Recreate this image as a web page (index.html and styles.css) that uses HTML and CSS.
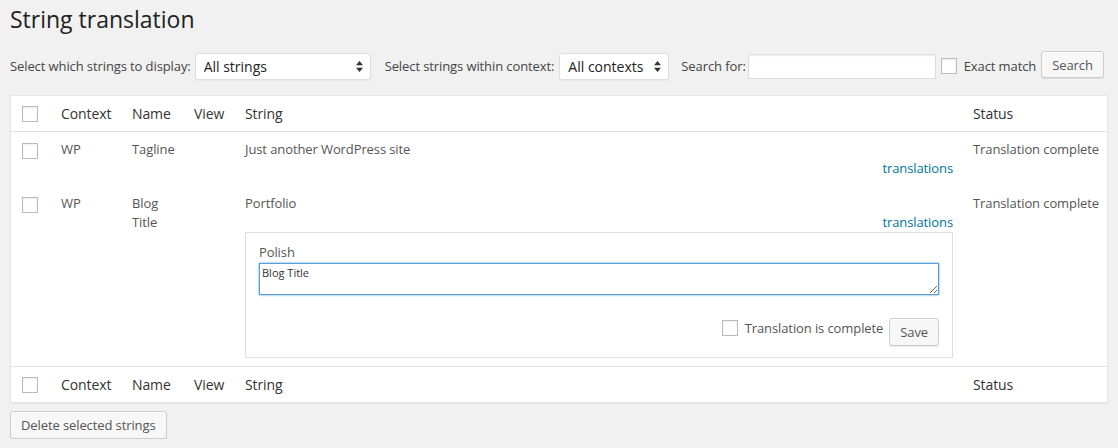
FILE: index.html
```html
<!DOCTYPE html>
<html lang="en">
<head>
    <meta charset="UTF-8">
    <title>String translation</title>
    <link rel="stylesheet" href="styles.css">
</head>
<body>
    <h2 class="page-title">String translation</h2>

    <form class="filters">
        <label class="filter-label" for="status">Select which strings to display:</label>
        <span class="select-wrap select-status">
            <select id="status"><option>All strings</option></select>
            <svg class="select-arrows" width="7" height="11" viewBox="0 0 7 11"><path d="M3.5 0L7 4.2H0z M3.5 11L0 6.8h7z" fill="#333"/></svg>
        </span>
        <label class="filter-label context-label" for="context">Select strings within context:</label>
        <span class="select-wrap select-context">
            <select id="context"><option>All contexts</option></select>
            <svg class="select-arrows" width="7" height="11" viewBox="0 0 7 11"><path d="M3.5 0L7 4.2H0z M3.5 11L0 6.8h7z" fill="#333"/></svg>
        </span>
        <label class="filter-label search-label" for="search">Search for:</label>
        <input class="search-input" id="search" type="text">
        <input class="check" id="exact" type="checkbox">
        <label class="filter-label exact-label" for="exact">Exact match</label>
        <button class="button search-button" type="button">Search</button>
    </form>

    <table class="strings">
        <colgroup>
            <col class="col-cb">
            <col class="col-context">
            <col class="col-name">
            <col class="col-view">
            <col class="col-string">
            <col class="col-status">
        </colgroup>
        <thead>
            <tr>
                <th class="check-column"><input class="check" type="checkbox"></th>
                <th>Context</th>
                <th>Name</th>
                <th>View</th>
                <th>String</th>
                <th>Status</th>
            </tr>
        </thead>
        <tbody>
            <tr>
                <td class="check-column"><input class="check" type="checkbox"></td>
                <td>WP</td>
                <td>Tagline</td>
                <td></td>
                <td>
                    <div>Just another WordPress site</div>
                    <div class="row-link"><a href="#">translations</a></div>
                </td>
                <td class="status">Translation complete</td>
            </tr>
            <tr>
                <td class="check-column"><input class="check" type="checkbox"></td>
                <td>WP</td>
                <td>Blog Title</td>
                <td></td>
                <td>
                    <div>Portfolio</div>
                    <div class="row-link"><a href="#">translations</a></div>
                    <div class="translation-box">
                        <label class="lang-label" for="pl">Polish</label>
                        <textarea class="translation-text" id="pl">Blog Title</textarea>
                        <div class="translation-actions">
                            <label class="complete-label"><input class="check" type="checkbox"> Translation is complete</label>
                            <button class="button" type="button">Save</button>
                        </div>
                    </div>
                </td>
                <td class="status">Translation complete</td>
            </tr>
        </tbody>
        <tfoot>
            <tr>
                <th class="check-column"><input class="check" type="checkbox"></th>
                <th>Context</th>
                <th>Name</th>
                <th>View</th>
                <th>String</th>
                <th>Status</th>
            </tr>
        </tfoot>
    </table>

    <div class="bulk-actions">
        <button class="button" type="button">Delete selected strings</button>
    </div>
</body>
</html>
```

FILE: styles.css
```css
body {
    margin: 0;
    padding: 0 10px;
    background: #f1f1f1;
    color: #444;
    font-family: "Open Sans", "Liberation Sans", sans-serif;
    font-size: 13px;
    line-height: 1.4;
    letter-spacing: -0.1px;
}
.page-title {
    margin: 5px 0 0;
    font-size: 23px;
    font-weight: 400;
    line-height: 29px;
    letter-spacing: 0;
    color: #222;
}

/* filter bar */
.filters {
    display: flex;
    align-items: center;
    height: 28px;
    margin-top: 18px;
}
.filter-label {
    color: #444;
    white-space: nowrap;
}
.context-label {
    margin-left: 14px;
}
.search-label {
    margin-left: 12px;
}
.select-wrap {
    position: relative;
    display: inline-block;
    margin-left: 4px;
}
.select-context {
    margin-left: 5px;
}
.select-wrap select {
    -webkit-appearance: none;
    appearance: none;
    display: block;
    height: 27px;
    padding: 0 24px 0 8px;
    border: 1px solid #ddd;
    border-radius: 3px;
    background: #fff;
    box-shadow: 0 1px 1px rgba(0, 0, 0, 0.05);
    color: #222;
    font-family: inherit;
    font-size: 14px;
    letter-spacing: 0;
}
.select-status select {
    width: 176px;
}
.select-context select {
    width: 110px;
}
.select-arrows {
    position: absolute;
    right: 8px;
    top: 8px;
    pointer-events: none;
}
.search-input {
    width: 188px;
    height: 25px;
    margin: 0 0 0 2px;
    padding: 2px 4px;
    box-sizing: border-box;
    border: 1px solid #ddd;
    background: #fff;
    box-shadow: inset 0 1px 2px rgba(0, 0, 0, 0.07);
    font-family: inherit;
    font-size: 13px;
}
.check {
    -webkit-appearance: none;
    appearance: none;
    display: inline-block;
    width: 16px;
    height: 16px;
    margin: 0;
    box-sizing: border-box;
    border: 1px solid #bbb;
    background: #fff;
    box-shadow: inset 0 1px 2px rgba(0, 0, 0, 0.07);
    vertical-align: middle;
}
.filters .check {
    margin-left: 5px;
}
.exact-label {
    margin-left: 7px;
}
.button {
    display: inline-block;
    height: 28px;
    padding: 0 10px 1px;
    box-sizing: border-box;
    border: 1px solid #ccc;
    border-radius: 3px;
    background: #f7f7f7;
    box-shadow: inset 0 1px 0 #fff, 0 1px 0 rgba(0, 0, 0, 0.08);
    color: #555;
    font-family: inherit;
    font-size: 13px;
    line-height: 26px;
    letter-spacing: -0.1px;
    white-space: nowrap;
    cursor: pointer;
}
.search-button {
    height: 27px;
    margin: 0 0 3px 5px;
}

/* strings table */
.strings {
    width: 1098px;
    margin-top: 15px;
    table-layout: fixed;
    border-collapse: separate;
    border-spacing: 0;
    border: 1px solid #e5e5e5;
    background: #fff;
    box-shadow: 0 1px 1px rgba(0, 0, 0, 0.04);
}
.col-cb { width: 40px; }
.col-context { width: 71px; }
.col-name { width: 62px; }
.col-view { width: 51px; }
.col-string { width: 728px; }
.col-status { width: 144px; }
.strings th {
    padding: 8px 10px;
    color: #333;
    font-size: 14px;
    font-weight: 400;
    line-height: 19px;
    text-align: left;
}
.strings thead th {
    border-bottom: 1px solid #e1e1e1;
}
.strings tfoot th {
    border-top: 1px solid #e1e1e1;
}
.strings td {
    padding: 8px 10px;
    color: #555;
    font-size: 13px;
    line-height: 19px;
    vertical-align: top;
}
.strings .check-column {
    padding: 0 0 0 11px;
    vertical-align: middle;
}
.strings .check-column .check {
    display: block;
}
.strings td.check-column {
    padding-top: 11px;
    vertical-align: top;
}
.strings td.status {
    white-space: nowrap;
}
.row-link {
    text-align: right;
}
.row-link a {
    color: #0074a2;
    text-decoration: none;
}

/* inline translation editor */
.translation-box {
    padding: 10px 13px 11px;
    border: 1px solid #dedede;
}
.lang-label {
    display: block;
    margin-bottom: 1px;
    color: #555;
}
.translation-text {
    display: block;
    width: 100%;
    height: 32px;
    margin: 0;
    padding: 2px;
    box-sizing: border-box;
    border: 1px solid #5b9dd9;
    box-shadow: 0 0 2px rgba(30, 140, 190, 0.8);
    color: #333;
    font-family: inherit;
    font-size: 11px;
    line-height: 14px;
}
.translation-actions {
    display: flex;
    align-items: center;
    justify-content: flex-end;
    margin-top: 23px;
}
.complete-label {
    display: flex;
    align-items: center;
    margin: 0 6px 8px 0;
    color: #555;
}
.complete-label .check {
    margin-right: 7px;
}

.bulk-actions {
    margin-top: 8px;
}
```
